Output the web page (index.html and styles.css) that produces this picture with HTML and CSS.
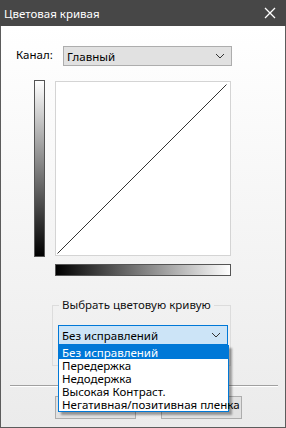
FILE: index.html
```html
<!DOCTYPE html>
<html lang="ru">
<head>
<meta charset="utf-8">
<link rel="stylesheet" href="styles.css">
</head>
<body>
<div class="window">
  <div class="titlebar">
    <span class="title">Цветовая кривая</span>
    <svg class="close" width="12" height="12" viewBox="0 0 12 12"><path d="M1 1L11 11M11 1L1 11" stroke="#fff" stroke-width="1.3" fill="none"/></svg>
  </div>
  <div class="body">
    <div class="channel-row">
      <span class="label">Канал:</span>
      <div class="select">
        <span>Главный</span>
        <svg width="10" height="6" viewBox="0 0 10 6"><path d="M1 1L5 5L9 1" stroke="#333" stroke-width="1" fill="none"/></svg>
      </div>
    </div>
    <div class="curve-row">
      <div class="vbar"></div>
      <div class="curve">
        <svg width="174" height="173" viewBox="0 0 174 173">
          <line x1="1.5" y1="171.5" x2="170.5" y2="2.5" stroke="#000" stroke-width="0.8"/>
        </svg>
      </div>
    </div>
    <div class="hbar"></div>
    <fieldset class="group">
      <legend>Выбрать цветовую кривую</legend>
      <div class="combo">
        <span>Без исправлений</span>
        <svg width="10" height="6" viewBox="0 0 10 6"><path d="M1 1L5 5L9 1" stroke="#333" stroke-width="1" fill="none"/></svg>
      </div>
    </fieldset>
    <div class="separator"></div>
    <div class="buttons">
      <div class="btn"></div>
      <div class="btn"></div>
    </div>
    <ul class="dropdown">
      <li class="selected">Без исправлений</li>
      <li>Передержка</li>
      <li>Недодержка</li>
      <li>Высокая Контраст.</li>
      <li>Негативная/позитивная пленка</li>
    </ul>
  </div>
</div>
</body>
</html>
```
FILE: styles.css
```css
* { box-sizing: border-box; }
html, body { margin: 0; padding: 0; }
body { font-family: "Noto Sans", "Open Sans", sans-serif; font-size: 11.5px; color: #000; background: #fff; }
.window { width: 286px; height: 428px; display: flex; flex-direction: column; }
.titlebar { height: 26px; background: #474747; display: flex; align-items: center; justify-content: space-between; padding: 0 10px 0 4px; flex: none; }
.title { color: #fff; font-size: 11.5px; }
.close { display: block; }
.body { position: relative; flex: 1; border: 1px solid #5c5c5c; border-top: none; background: linear-gradient(#ffffff, #ebebeb); display: flex; flex-direction: column; }
.channel-row { display: flex; align-items: center; margin-top: 20px; height: 20px; }
.label { margin-left: 15px; width: 47px; position: relative; top: -2px; }
.select { width: 169px; height: 20px; background: #e1e1e1; border: 1px solid #adadad; display: flex; align-items: center; justify-content: space-between; padding: 0 6px 0 3px; }
.curve-row { display: flex; align-items: flex-start; margin-top: 14px; }
.vbar { margin-left: 33px; width: 11px; height: 177px; border: 1px solid #555; background: linear-gradient(#fff, #000); }
.curve { margin-left: 10px; margin-top: 1px; width: 176px; height: 175px; border: 1px solid #d4d4d4; background: #fff; }
.curve svg { display: block; }
.hbar { margin-left: 54px; margin-top: 7px; width: 176px; height: 12px; border: 1px solid #555; background: linear-gradient(to right, #000, #fff); }
.group { margin: 21px 0 0 51px; width: 179px; border: 1px solid #dcdcdc; padding: 0 0 20px 0; min-width: 0; }
.group legend { margin-left: 6px; padding: 0 3px; color: #111; line-height: 16px; }
.combo { margin: 12px 0 0 5px; width: 170px; height: 20px; background: #cce4f7; border: 1px solid #0078d7; display: flex; align-items: center; justify-content: space-between; padding: 0 6px 0 3px; }
.separator { margin: 19px 0 0 9px; width: 268px; height: 2px; background: #a0a0a0; border-bottom: 1px solid #fff; }
.buttons { display: flex; gap: 25px; margin: 9px 0 0 54px; }
.btn { width: 81px; height: 23px; border: 1px solid #adadad; background: #e1e1e1; }
.dropdown { position: absolute; left: 57px; top: 319px; width: 171px; margin: 0; padding: 0; list-style: none; background: #fff; border: 1px solid #0078d7; box-shadow: 3px 3px 2px rgba(0,0,0,0.35); }
.dropdown li { height: 13px; line-height: 13px; padding-left: 3px; white-space: nowrap; }
.dropdown li.selected { background: #0078d7; color: #fff; }
```
